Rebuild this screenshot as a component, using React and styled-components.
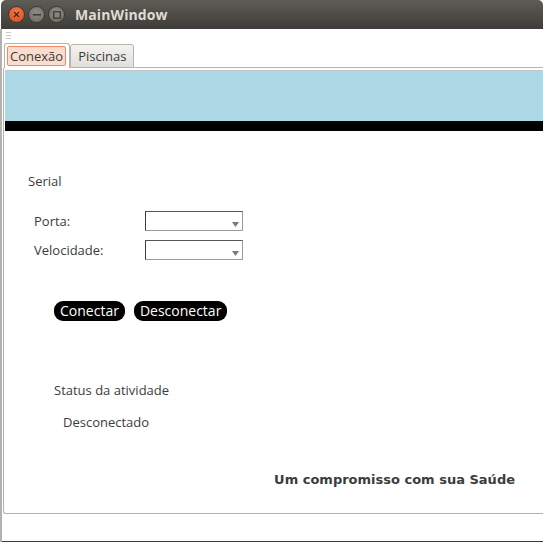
import React from "react";
import styled, { createGlobalStyle } from "styled-components";

const Global = createGlobalStyle`
  html, body { margin: 0; padding: 0; background: #ffffff; }
  body { font-family: "Open Sans", "DejaVu Sans", sans-serif; }
`;

const Screen = styled.div`
  width: 543px;
  height: 542px;
  display: flex;
  flex-direction: column;
  overflow: hidden;
  background: #ffffff;
`;

const TitleBar = styled.div`
  height: 29px;
  flex: none;
  margin-left: 1px;
  border-radius: 5px 5px 0 0;
  background: linear-gradient(#5f5c56, #3d3c38);
  display: flex;
  align-items: center;
  padding-left: 7px;
  gap: 2px;
`;

const WinButton = styled.div`
  width: 17px;
  height: 17px;
  border-radius: 50%;
  box-sizing: border-box;
  border: 1px solid #3a3935;
  background: ${(p) =>
    p.$close
      ? "radial-gradient(circle at 50% 35%, #f27a4e, #dd4814)"
      : "radial-gradient(circle at 50% 35%, #8f8c85, #6b6963)"};
  display: flex;
  align-items: center;
  justify-content: center;
  margin-right: 1px;
`;

const Title = styled.div`
  margin-left: 7px;
  color: #dfdbd2;
  font-family: "Open Sans", "DejaVu Sans", sans-serif;
  font-weight: 700;
  font-size: 14px;
  letter-spacing: 0.1px;
`;

const Body = styled.div`
  flex: 1;
  display: flex;
  flex-direction: column;
  border-left: 2px solid #b4b2ad;
`;

const GripRow = styled.div`
  height: 14px;
  flex: none;
  display: flex;
  align-items: center;
  padding-left: 4px;
`;

const TabRow = styled.div`
  height: 25px;
  flex: none;
  display: flex;
  align-items: flex-end;
  padding-left: 2px;
`;

const Tab = styled.div`
  box-sizing: border-box;
  height: ${(p) => (p.$active ? "25px" : "24px")};
  padding: 2px ${(p) => (p.$active ? "3px" : "2px")} 2px 2px;
  border: 1px solid #b5b3ad;
  border-bottom: ${(p) => (p.$active ? "none" : "1px solid #b5b3ad")};
  border-radius: 3px 3px 0 0;
  background: ${(p) => (p.$active ? "#ffffff" : "linear-gradient(#f4f3f1, #e0dfdb)")};
  display: flex;
  align-items: stretch;
  font-size: 13px;
  color: #3c3c3c;
`;

const TabLabel = styled.div`
  display: flex;
  align-items: center;
  padding: 0 ${(p) => (p.$focus ? "2px" : "4px")};
  border: 1px solid ${(p) => (p.$focus ? "#f0895f" : "transparent")};
  border-radius: 2px;
  background: ${(p) => (p.$focus ? "#fbdccd" : "transparent")};
`;

const TabFill = styled.div`
  flex: 1;
  align-self: stretch;
  border-bottom: 1px solid #b5b3ad;
`;

const Pane = styled.div`
  height: 444px;
  flex: none;
  margin-left: 1px;
  border-left: 1px solid #b5b3ad;
  border-bottom: 1px solid #b5b3ad;
  display: flex;
  flex-direction: column;
  padding-top: 1px;
  border-radius: 0 0 0 3px;
`;

const Banner = styled.div`
  height: 51px;
  margin-left: 1px;
  margin-top: 1px;
  background: #add8e6;
  border-top: 1px solid #c2c6c8;
  box-sizing: border-box;
`;

const BlackBar = styled.div`
  height: 10px;
  margin-left: 1px;
  background: #000000;
`;

const Content = styled.div`
  flex: 1;
  display: flex;
  flex-direction: column;
  padding-left: 24px;
  color: #3c3c3c;
  font-size: 13px;
`;

const SectionTitle = styled.div`
  margin-top: 41px;
  height: 18px;
  line-height: 18px;
`;

const FormGrid = styled.div`
  margin-top: 21px;
  margin-left: 6px;
  display: grid;
  grid-template-columns: 111px 98px;
  row-gap: 9px;
  align-items: center;
`;

const FieldLabel = styled.div`
  line-height: 18px;
`;

const Combo = styled.div`
  box-sizing: border-box;
  width: 98px;
  height: 20px;
  border: 1px solid #3c3c3c;
  border-top-color: #555;
  border-right-color: #9a9a9a;
  border-bottom-color: #9a9a9a;
  background: #ffffff;
  display: flex;
  align-items: flex-end;
  justify-content: flex-end;
  padding: 0 3px 3px 0;
`;

const ButtonRow = styled.div`
  margin-top: 41px;
  margin-left: 26px;
  display: flex;
  gap: 9px;
`;

const PillButton = styled.button`
  height: 20px;
  padding: 0 6px;
  border: none;
  border-radius: 9px;
  background: #000000;
  color: #ffffff;
  font-family: "Open Sans", "DejaVu Sans", sans-serif;
  font-size: 14px;
  line-height: 20px;
  cursor: pointer;
`;

const StatusTitle = styled.div`
  margin-top: 60px;
  margin-left: 26px;
  line-height: 18px;
`;

const StatusValue = styled.div`
  margin-top: 14px;
  margin-left: 35px;
  line-height: 18px;
`;

const Slogan = styled.div`
  margin-top: 40px;
  align-self: flex-end;
  margin-right: 28px;
  font-family: "DejaVu Sans", "Open Sans", sans-serif;
  font-weight: 700;
  font-size: 13px;
  color: #3c3c3c;
  line-height: 18px;
`;

const BottomStrip = styled.div`
  flex: 1;
  background: #ffffff;
  border-bottom: 1px solid #3a3a3a;
`;

function Arrow() {
  return (
    <svg width="7" height="5" viewBox="0 0 7 5">
      <path d="M0 0 H7 L3.5 5 Z" fill="#7a7a7a" />
    </svg>
  );
}

function Grip() {
  return (
    <svg width="6" height="8" viewBox="0 0 6 8">
      <rect x="0" y="0" width="5" height="1" fill="#c8c8c8" />
      <rect x="0" y="3" width="5" height="1" fill="#c8c8c8" />
      <rect x="0" y="6" width="5" height="1" fill="#c8c8c8" />
    </svg>
  );
}

export default function App() {
  return (
    <>
      <Global />
      <Screen>
        <TitleBar>
          <WinButton $close>
            <svg width="7" height="7" viewBox="0 0 7 7">
              <path d="M1 1 L6 6 M6 1 L1 6" stroke="#3a2a20" strokeWidth="1.3" />
            </svg>
          </WinButton>
          <WinButton>
            <svg width="8" height="2" viewBox="0 0 8 2">
              <rect width="8" height="1.5" fill="#3c3b37" />
            </svg>
          </WinButton>
          <WinButton>
            <svg width="8" height="8" viewBox="0 0 8 8">
              <rect x="0.75" y="0.75" width="6.5" height="6.5" fill="none" stroke="#3c3b37" strokeWidth="1.3" />
            </svg>
          </WinButton>
          <Title>MainWindow</Title>
        </TitleBar>
        <Body>
          <GripRow>
            <Grip />
          </GripRow>
          <TabRow>
            <Tab $active>
              <TabLabel $focus>Conexão</TabLabel>
            </Tab>
            <Tab>
              <TabLabel>Piscinas</TabLabel>
            </Tab>
            <TabFill />
          </TabRow>
          <Pane>
            <Banner />
            <BlackBar />
            <Content>
              <SectionTitle>Serial</SectionTitle>
              <FormGrid>
                <FieldLabel>Porta:</FieldLabel>
                <Combo>
                  <Arrow />
                </Combo>
                <FieldLabel>Velocidade:</FieldLabel>
                <Combo>
                  <Arrow />
                </Combo>
              </FormGrid>
              <ButtonRow>
                <PillButton>Conectar</PillButton>
                <PillButton>Desconectar</PillButton>
              </ButtonRow>
              <StatusTitle>Status da atividade</StatusTitle>
              <StatusValue>Desconectado</StatusValue>
              <Slogan>Um compromisso com sua Saúde</Slogan>
            </Content>
          </Pane>
          <BottomStrip />
        </Body>
      </Screen>
    </>
  );
}
